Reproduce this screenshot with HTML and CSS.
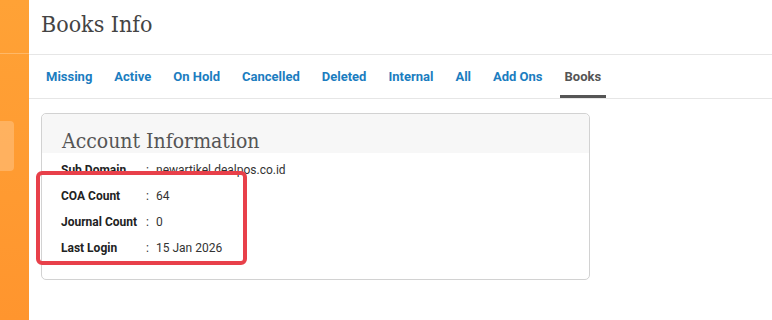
FILE: index.html
```html
<!DOCTYPE html>
<html lang="en">
<head>
	<meta charset="UTF-8">
	<title>Books Info</title>
	<link rel="stylesheet" href="styles.css">
</head>
<body>
	<div class="app">
		<aside class="sidebar">
			<div class="sidebar-top"></div>
			<div class="sidebar-item"></div>
		</aside>
		<main class="main">
			<header class="page-head">
				<h1>Books Info</h1>
			</header>
			<ul class="tabs">
				<li>Missing</li>
				<li>Active</li>
				<li>On Hold</li>
				<li>Cancelled</li>
				<li>Deleted</li>
				<li>Internal</li>
				<li>All</li>
				<li>Add Ons</li>
				<li class="active">Books</li>
			</ul>
			<section class="card">
				<div class="card-head">
					<h2>Account Information</h2>
				</div>
				<div class="card-body">
					<div class="row"><span class="label">Sub Domain</span><span class="sep">:</span><span class="value">newartikel.dealpos.co.id</span></div>
					<div class="row"><span class="label">COA Count</span><span class="sep">:</span><span class="value">64</span></div>
					<div class="row"><span class="label">Journal Count</span><span class="sep">:</span><span class="value">0</span></div>
					<div class="row"><span class="label">Last Login</span><span class="sep">:</span><span class="value">15 Jan 2026</span></div>
					<div class="highlight"></div>
				</div>
			</section>
		</main>
	</div>
</body>
</html>
```

FILE: styles.css
```css
*{
	padding: 0;
	margin: 0;
	box-sizing: border-box;
}
html,body{
	height: 100%;
	background: #fff;
	font-family: Roboto, "Liberation Sans", sans-serif;
	color: #333;
}
ul,li{
	list-style: none;
}
.app{
	display: flex;
	height: 100%;
}
.sidebar{
	width: 29px;
	flex-shrink: 0;
	background: linear-gradient(#ffa236, #ff952e);
	display: flex;
	flex-direction: column;
}
.sidebar-top{
	height: 54px;
	border-bottom: 1px solid rgba(255,255,255,0.25);
}
.sidebar-item{
	margin-top: 67px;
	width: 14px;
	height: 50px;
	background: rgba(255,255,255,0.22);
	border-radius: 0 4px 4px 0;
}
.main{
	flex: 1;
}
.page-head{
	height: 55px;
	padding: 9px 12px 0;
	border-bottom: 1px solid #e6e6e6;
}
.page-head h1{
	font-family: "DejaVu Serif Condensed", "DejaVu Serif", serif;
	font-stretch: condensed;
	font-weight: normal;
	font-size: 23px;
	color: #444;
	line-height: 30px;
}
.tabs{
	display: flex;
	height: 44px;
	padding: 0 12px;
	border-bottom: 1px solid #e6e6e6;
}
.tabs li{
	padding: 0 5px;
	margin-right: 12px;
	line-height: 43px;
	font-size: 13px;
	font-weight: bold;
	color: #1b7dc0;
	border-bottom: 3px solid transparent;
}
.tabs li.active{
	color: #555;
	border-bottom-color: #555;
}
.card{
	position: relative;
	width: 549px;
	margin: 14px 0 0 12px;
	border: 1px solid #d2d2d2;
	border-radius: 5px;
	height: 167px;
}
.card-head{
	height: 39px;
	background: #f7f7f7;
	border-radius: 5px 5px 0 0;
	padding: 14px 20px 0;
}
.card-head h2{
	font-family: "DejaVu Serif Condensed", "DejaVu Serif", serif;
	font-stretch: condensed;
	font-weight: normal;
	font-size: 21px;
	color: #555;
	line-height: 26px;
}
.card-body{
	padding: 4px 19px 0;
}
.row{
	display: flex;
	height: 26px;
	align-items: center;
	font-size: 12px;
}
.label{
	width: 85px;
	font-weight: bold;
	color: #222;
}
.sep{
	width: 10px;
}
.value{
	color: #333;
}
.highlight{
	position: absolute;
	left: -6px;
	top: 57px;
	width: 211px;
	height: 94px;
	border: 4px solid #e8404a;
	border-radius: 6px;
}
```
